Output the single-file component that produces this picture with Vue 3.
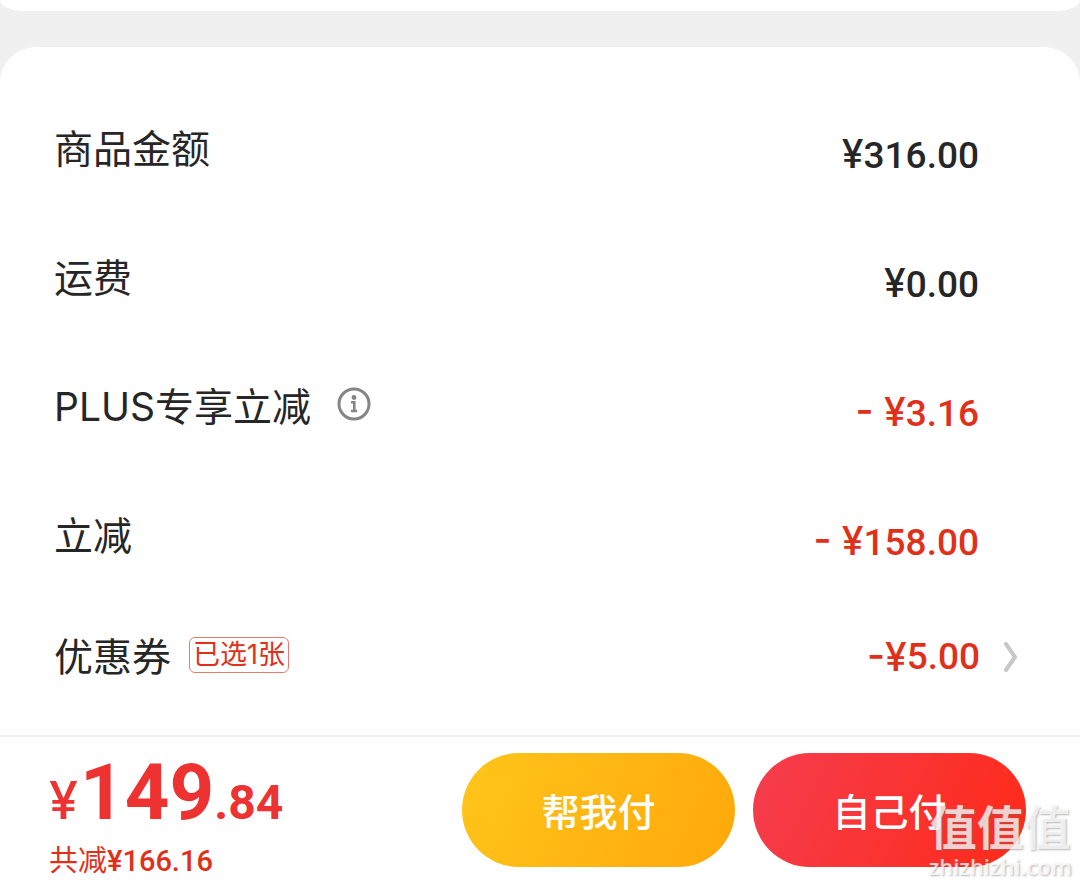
<script setup>
const rows = [
  { label: '商品金额', sign: '¥', value: '316.00' },
  { label: '运费', sign: '¥', value: '0.00' },
  { label: 'PLUS专享立减', sign: '- ¥', value: '3.16', info: true, off: true },
  { label: '立减', sign: '- ¥', value: '158.00', off: true },
]
</script>

<template>
  <div class="page">
    <div class="previous"></div>
    <main class="card">
      <dl class="rows">
        <div v-for="row in rows" :key="row.label" class="row">
          <dt class="label">
            {{ row.label }}
            <button v-if="row.info" class="info" type="button" aria-label="说明">
              <svg width="34" height="34" viewBox="0 0 34 34" fill="none" stroke="#858585">
                <circle cx="17" cy="17" r="15" stroke-width="3" />
                <circle cx="17" cy="10.5" r="2.4" fill="#858585" stroke="none" />
                <path d="M14 15.3H17.3V24M14 24H20" stroke-width="2.6" />
              </svg>
            </button>
          </dt>
          <dd class="amount" :class="{ off: row.off }"><span class="sign">{{ row.sign }}</span>{{ row.value }}</dd>
        </div>
        <div class="row coupon">
          <dt class="label">优惠券 <span class="badge">已选1张</span></dt>
          <dd class="amount off">
            <span class="sign">-¥</span>5.00<button class="more" type="button" aria-label="选择优惠券">
              <svg width="14" height="32" viewBox="0 0 14 32" fill="none" stroke="#c8c8c8" stroke-width="4" stroke-linecap="round" stroke-linejoin="round">
                <path d="M2 3L11 16L2 29" />
              </svg>
            </button>
          </dd>
        </div>
      </dl>
    </main>
    <footer class="bar">
      <div class="total">
        <div class="price"><span class="yen">¥</span><span class="whole">149</span><span class="cents">.84</span></div>
        <div class="saved">共减<span class="saved-num">¥166.16</span></div>
      </div>
      <div class="actions">
        <button class="pay friend" type="button">帮我付</button>
        <button class="pay self" type="button">自己付</button>
      </div>
      <div class="mark">
        <div class="mark-name">值值值</div>
        <div class="mark-site">zhizhizhi.com</div>
      </div>
    </footer>
  </div>
</template>

<style>
body {
  margin: 0;
  background: #f0f0f0;
}
</style>

<style scoped>
.page {
  min-height: 100vh;
  display: flex;
  flex-direction: column;
  background: #f0f0f0;
  color: #262626;
  font-family: Inter, "Noto Sans CJK SC", sans-serif;
}
button {
  border: 0;
  padding: 0;
  background: none;
  font-family: inherit;
  cursor: pointer;
}
svg {
  display: block;
}
.previous {
  height: 11px;
  margin-bottom: 36px;
  background: #fff;
  border-radius: 0 0 24px 24px / 0 0 11px 11px;
}
.card {
  flex: 1;
  background: #fff;
  border-radius: 36px 36px 0 0;
  padding: 37px 54px 0;
}
.rows {
  margin: 0;
}
.row {
  height: 129px;
  display: flex;
  align-items: center;
  justify-content: space-between;
}
.row.coupon {
  height: 114px;
}
.label {
  display: flex;
  align-items: center;
  font-size: 39px;
  line-height: 56px;
}
.info {
  margin: 0 0 6px 26px;
}
.amount {
  display: flex;
  align-items: baseline;
  margin: 0;
  padding: 12px 47px 0 0;
  font-family: Roboto, sans-serif;
  font-size: 37px;
  line-height: 46px;
  font-weight: 500;
}
.sign {
  font-family: Inter, sans-serif;
  font-size: 39px;
  white-space: pre;
}
.off {
  color: #e1301a;
}
.coupon .amount {
  align-items: center;
  padding: 0 8px 0 0;
}
.more {
  margin-left: 24px;
}
.badge {
  margin: 0 0 4px 18px;
  box-sizing: border-box;
  height: 36px;
  padding: 0 3px;
  border: 1px solid #e27b6f;
  border-radius: 6px;
  color: #e1301a;
  font-size: 27px;
  line-height: 34px;
}
.bar {
  position: relative;
  height: 150px;
  box-sizing: border-box;
  border-top: 2px solid #f0f0f0;
  background: #fff;
  display: flex;
  justify-content: space-between;
  align-items: flex-start;
  padding: 16px 54px 0 49px;
}
.price {
  display: flex;
  align-items: baseline;
  height: 88px;
  color: #ee3131;
  font-family: Roboto, sans-serif;
  line-height: 80px;
}
.yen {
  margin-right: 2px;
  font-family: Inter, sans-serif;
  font-size: 52px;
  font-weight: 500;
}
.whole {
  font-size: 78px;
  font-weight: 700;
}
.cents {
  font-size: 48px;
  font-weight: 700;
}
.saved {
  color: #e1301a;
  font-size: 29px;
  line-height: 40px;
}
.saved-num {
  font-family: Roboto, sans-serif;
  font-weight: 500;
}
.actions {
  display: flex;
  gap: 18px;
}
.pay {
  width: 273px;
  height: 114px;
  padding-bottom: 2px;
  border-radius: 57px;
  color: #fff;
  font-size: 38px;
  font-weight: 500;
}
.friend {
  background: linear-gradient(115deg, #ffc51a, #ffa80a);
}
.self {
  background: linear-gradient(115deg, #f53d4f, #ff2a17);
}
.mark {
  position: absolute;
  right: 8px;
  bottom: 6px;
  color: rgba(255, 255, 255, 0.75);
  text-shadow: 1px 1px 2px rgba(120, 110, 110, 0.5);
  pointer-events: none;
  text-align: center;
  white-space: nowrap;
}
.mark-name {
  font-size: 47px;
  line-height: 50px;
  font-weight: 700;
}
.mark-site {
  font-family: "Open Sans", sans-serif;
  font-size: 22px;
  line-height: 26px;
  font-weight: 600;
}
</style>
